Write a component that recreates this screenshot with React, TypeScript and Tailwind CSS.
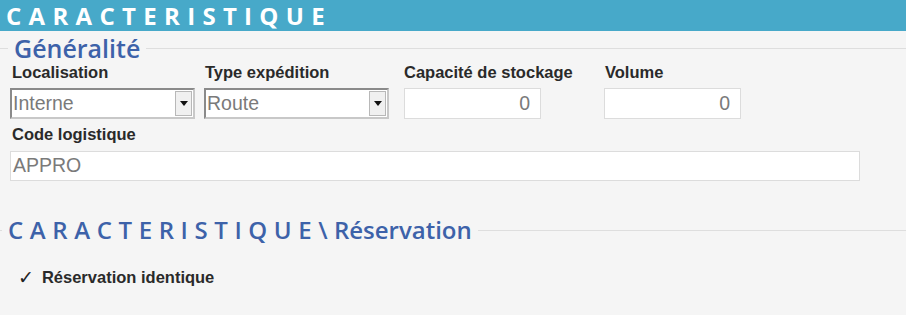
import React from "react";

const Select = ({ value }: { value: string }) => (
  <div className="flex h-[31px] w-[185px] items-stretch border-2 border-t-[#8a8a8a] border-l-[#8a8a8a] border-r-[#c8c8c8] border-b-[#c8c8c8] bg-white">
    <div className="flex flex-1 items-center pl-[1px] text-[19.5px] leading-none text-[#7a7a7a]">{value}</div>
    <div className="m-[1px] flex w-[17px] items-center justify-center border border-[#b8b8b8] bg-[#f0f0f0]">
      <svg width="8" height="5" viewBox="0 0 8 5"><path d="M0 0h8L4 5z" fill="#111" /></svg>
    </div>
  </div>
);

const NumInput = ({ value }: { value: string }) => (
  <div className="flex h-[31px] w-[137px] items-center justify-end border border-[#dcdcdc] bg-white pr-[10px] text-[19.5px] leading-none text-[#7a7a7a]">
    {value}
  </div>
);

const Label = ({ children }: { children: React.ReactNode }) => (
  <div className="h-[20px] whitespace-nowrap text-[16.5px] font-bold leading-[20px] text-[#2a2a2a]">{children}</div>
);

export default function App() {
  return (
    <div className="h-[315px] w-[906px] bg-[#f5f5f5] font-['Liberation_Sans',Arial,sans-serif]">
      <div className="flex h-[31px] items-center bg-[#47a9c9] pl-[6px] font-['Open_Sans',sans-serif] text-[24px] font-bold tracking-[7.3px] text-white">
        CARACTERISTIQUE
      </div>
      <fieldset className="mt-[4px] border-0 border-t border-[#dedede] p-0">
        <legend className="ml-[8px] px-[6px] font-['Open_Sans',sans-serif] text-[25px] font-semibold leading-[26px] text-[#3d62a9]">
          Généralité
        </legend>
        <div className="flex pl-[10px] pt-[1px]">
          <div className="flex w-[194px] flex-col">
            <div className="pl-[2px]"><Label>Localisation</Label></div>
            <div className="mt-[6px]"><Select value="Interne" /></div>
          </div>
          <div className="flex w-[200px] flex-col">
            <div className="pl-[1px]"><Label>Type expédition</Label></div>
            <div className="mt-[6px]"><Select value="Route" /></div>
          </div>
          <div className="flex w-[200px] flex-col">
            <Label>Capacité de stockage</Label>
            <div className="mt-[6px]"><NumInput value="0" /></div>
          </div>
          <div className="flex flex-col">
            <div className="pl-[1px]"><Label>Volume</Label></div>
            <div className="mt-[6px]"><NumInput value="0" /></div>
          </div>
        </div>
        <div className="mt-[5px] flex flex-col pl-[10px]">
          <div className="pl-[2px]"><Label>Code logistique</Label></div>
          <div className="mt-[7px] flex h-[30px] w-[850px] items-center border border-[#dcdcdc] bg-white pl-[2px] text-[19.5px] leading-none text-[#7a7a7a]">
            APPRO
          </div>
        </div>
      </fieldset>
      <fieldset className="mt-[36px] border-0 border-t border-[#dedede] p-0">
        <legend className="ml-[2px] px-[6px] font-['Open_Sans',sans-serif] text-[24px] font-semibold leading-[26px] text-[#3d62a9]">
          <span className="tracking-[6.6px]">CARACTERISTIQUE</span>\ Réservation
        </legend>
        <div className="mt-[24px] flex items-center pl-[18px]">
          <span className="mr-[8px] font-['DejaVu_Sans',sans-serif] text-[19px] leading-none text-[#222]">✓</span>
          <span className="text-[16.5px] font-bold leading-[20px] text-[#2a2a2a]">Réservation identique</span>
        </div>
      </fieldset>
    </div>
  );
}
